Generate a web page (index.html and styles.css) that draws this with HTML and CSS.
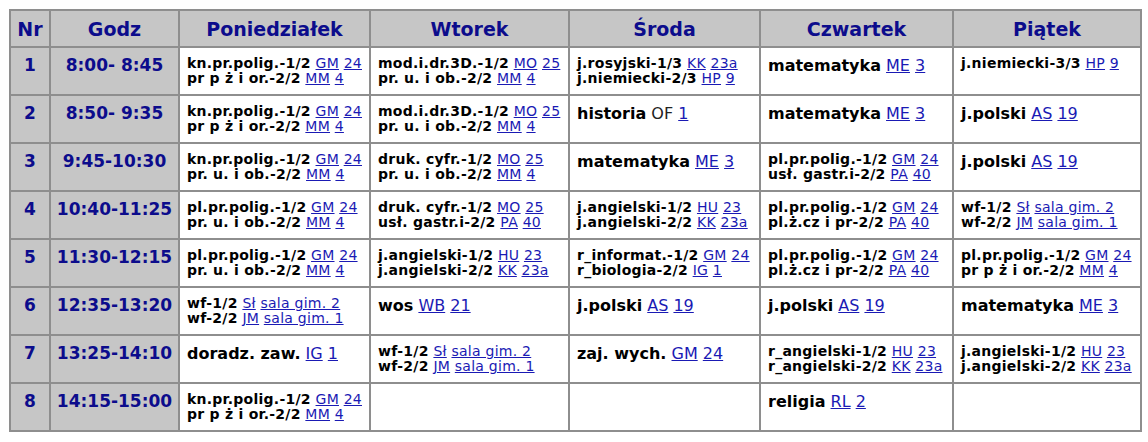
FILE: index.html
```html
<!DOCTYPE html>
<html lang="pl">
<head>
<meta charset="utf-8">
<title>Plan lekcji</title>
<link rel="stylesheet" href="styles.css">
</head>
<body>
<table class="tabela">
<thead>
<tr>
<th class="c-nr">Nr</th>
<th class="c-g">Godz</th>
<th class="c-d3">Poniedziałek</th>
<th class="c-d4">Wtorek</th>
<th class="c-d5">Środa</th>
<th class="c-d6">Czwartek</th>
<th class="c-d7">Piątek</th>
</tr>
</thead>
<tbody>
<tr>
<td class="nr">1</td>
<td class="g">8:00- 8:45</td>
<td class="l"><span class="p">kn.pr.polig.-1/2</span> <a href="#">GM</a> <a href="#">24</a><br><span class="p">pr p ż i or.-2/2</span> <a href="#">MM</a> <a href="#">4</a></td>
<td class="l"><span class="p">mod.i.dr.3D.-1/2</span> <a href="#">MO</a> <a href="#">25</a><br><span class="p">pr. u. i ob.-2/2</span> <a href="#">MM</a> <a href="#">4</a></td>
<td class="l"><span class="p">j.rosyjski-1/3</span> <a href="#">KK</a> <a href="#">23a</a><br><span class="p">j.niemiecki-2/3</span> <a href="#">HP</a> <a href="#">9</a></td>
<td class="l big"><span class="p">matematyka</span> <a href="#">ME</a> <a href="#">3</a></td>
<td class="l"><span class="p">j.niemiecki-3/3</span> <a href="#">HP</a> <a href="#">9</a></td>
</tr>
<tr>
<td class="nr">2</td>
<td class="g">8:50- 9:35</td>
<td class="l"><span class="p">kn.pr.polig.-1/2</span> <a href="#">GM</a> <a href="#">24</a><br><span class="p">pr p ż i or.-2/2</span> <a href="#">MM</a> <a href="#">4</a></td>
<td class="l"><span class="p">mod.i.dr.3D.-1/2</span> <a href="#">MO</a> <a href="#">25</a><br><span class="p">pr. u. i ob.-2/2</span> <a href="#">MM</a> <a href="#">4</a></td>
<td class="l big"><span class="p">historia</span> <span class="n">OF</span> <a href="#">1</a></td>
<td class="l big"><span class="p">matematyka</span> <a href="#">ME</a> <a href="#">3</a></td>
<td class="l big"><span class="p">j.polski</span> <a href="#">AS</a> <a href="#">19</a></td>
</tr>
<tr>
<td class="nr">3</td>
<td class="g">9:45-10:30</td>
<td class="l"><span class="p">kn.pr.polig.-1/2</span> <a href="#">GM</a> <a href="#">24</a><br><span class="p">pr. u. i ob.-2/2</span> <a href="#">MM</a> <a href="#">4</a></td>
<td class="l"><span class="p">druk. cyfr.-1/2</span> <a href="#">MO</a> <a href="#">25</a><br><span class="p">pr. u. i ob.-2/2</span> <a href="#">MM</a> <a href="#">4</a></td>
<td class="l big"><span class="p">matematyka</span> <a href="#">ME</a> <a href="#">3</a></td>
<td class="l"><span class="p">pl.pr.polig.-1/2</span> <a href="#">GM</a> <a href="#">24</a><br><span class="p">usł. gastr.i-2/2</span> <a href="#">PA</a> <a href="#">40</a></td>
<td class="l big"><span class="p">j.polski</span> <a href="#">AS</a> <a href="#">19</a></td>
</tr>
<tr>
<td class="nr">4</td>
<td class="g">10:40-11:25</td>
<td class="l"><span class="p">pl.pr.polig.-1/2</span> <a href="#">GM</a> <a href="#">24</a><br><span class="p">pr. u. i ob.-2/2</span> <a href="#">MM</a> <a href="#">4</a></td>
<td class="l"><span class="p">druk. cyfr.-1/2</span> <a href="#">MO</a> <a href="#">25</a><br><span class="p">usł. gastr.i-2/2</span> <a href="#">PA</a> <a href="#">40</a></td>
<td class="l"><span class="p">j.angielski-1/2</span> <a href="#">HU</a> <a href="#">23</a><br><span class="p">j.angielski-2/2</span> <a href="#">KK</a> <a href="#">23a</a></td>
<td class="l"><span class="p">pl.pr.polig.-1/2</span> <a href="#">GM</a> <a href="#">24</a><br><span class="p">pl.ż.cz i pr-2/2</span> <a href="#">PA</a> <a href="#">40</a></td>
<td class="l"><span class="p">wf-1/2</span> <a href="#">Sł</a> <a href="#">sala gim. 2</a><br><span class="p">wf-2/2</span> <a href="#">JM</a> <a href="#">sala gim. 1</a></td>
</tr>
<tr>
<td class="nr">5</td>
<td class="g">11:30-12:15</td>
<td class="l"><span class="p">pl.pr.polig.-1/2</span> <a href="#">GM</a> <a href="#">24</a><br><span class="p">pr. u. i ob.-2/2</span> <a href="#">MM</a> <a href="#">4</a></td>
<td class="l"><span class="p">j.angielski-1/2</span> <a href="#">HU</a> <a href="#">23</a><br><span class="p">j.angielski-2/2</span> <a href="#">KK</a> <a href="#">23a</a></td>
<td class="l"><span class="p">r_informat.-1/2</span> <a href="#">GM</a> <a href="#">24</a><br><span class="p">r_biologia-2/2</span> <a href="#">IG</a> <a href="#">1</a></td>
<td class="l"><span class="p">pl.pr.polig.-1/2</span> <a href="#">GM</a> <a href="#">24</a><br><span class="p">pl.ż.cz i pr-2/2</span> <a href="#">PA</a> <a href="#">40</a></td>
<td class="l"><span class="p">pl.pr.polig.-1/2</span> <a href="#">GM</a> <a href="#">24</a><br><span class="p">pr p ż i or.-2/2</span> <a href="#">MM</a> <a href="#">4</a></td>
</tr>
<tr>
<td class="nr">6</td>
<td class="g">12:35-13:20</td>
<td class="l"><span class="p">wf-1/2</span> <a href="#">Sł</a> <a href="#">sala gim. 2</a><br><span class="p">wf-2/2</span> <a href="#">JM</a> <a href="#">sala gim. 1</a></td>
<td class="l big"><span class="p">wos</span> <a href="#">WB</a> <a href="#">21</a></td>
<td class="l big"><span class="p">j.polski</span> <a href="#">AS</a> <a href="#">19</a></td>
<td class="l big"><span class="p">j.polski</span> <a href="#">AS</a> <a href="#">19</a></td>
<td class="l big"><span class="p">matematyka</span> <a href="#">ME</a> <a href="#">3</a></td>
</tr>
<tr>
<td class="nr">7</td>
<td class="g">13:25-14:10</td>
<td class="l big"><span class="p">doradz. zaw.</span> <a href="#">IG</a> <a href="#">1</a></td>
<td class="l"><span class="p">wf-1/2</span> <a href="#">Sł</a> <a href="#">sala gim. 2</a><br><span class="p">wf-2/2</span> <a href="#">JM</a> <a href="#">sala gim. 1</a></td>
<td class="l big"><span class="p">zaj. wych.</span> <a href="#">GM</a> <a href="#">24</a></td>
<td class="l"><span class="p">r_angielski-1/2</span> <a href="#">HU</a> <a href="#">23</a><br><span class="p">r_angielski-2/2</span> <a href="#">KK</a> <a href="#">23a</a></td>
<td class="l"><span class="p">j.angielski-1/2</span> <a href="#">HU</a> <a href="#">23</a><br><span class="p">j.angielski-2/2</span> <a href="#">KK</a> <a href="#">23a</a></td>
</tr>
<tr>
<td class="nr">8</td>
<td class="g">14:15-15:00</td>
<td class="l"><span class="p">kn.pr.polig.-1/2</span> <a href="#">GM</a> <a href="#">24</a><br><span class="p">pr p ż i or.-2/2</span> <a href="#">MM</a> <a href="#">4</a></td>
<td class="l">&nbsp;</td>
<td class="l">&nbsp;</td>
<td class="l big"><span class="p">religia</span> <a href="#">RL</a> <a href="#">2</a></td>
<td class="l">&nbsp;</td>
</tr>
</tbody>
</table>
</body>
</html>
```
FILE: styles.css
```css
html, body {
  margin: 0;
  padding: 0;
  background: #ffffff;
}

body {
  padding: 9px 0 0 9px;
  font-family: "DejaVu Sans", Verdana, sans-serif;
}

.tabela {
  border-collapse: separate;
  border-spacing: 0;
  table-layout: fixed;
  width: 1131px;
  border-left: 2px solid #8e8e8e;
  border-top: 2px solid #8e8e8e;
}

.tabela th,
.tabela td {
  box-sizing: border-box;
  border-right: 2px solid #8e8e8e;
  border-bottom: 2px solid #8e8e8e;
}

.tabela th {
  height: 37px;
  padding: 0;
  background: #c6c6c6;
  color: #0c0c8c;
  font-size: 19px;
  font-weight: bold;
  text-align: center;
  vertical-align: middle;
}

.c-nr { width: 40px; }
.c-g { width: 129px; }
.c-d3 { width: 191px; }
.c-d4 { width: 199px; }
.c-d5 { width: 191px; }
.c-d6 { width: 193px; }
.c-d7 { width: 188px; }

.tabela td {
  height: 48px;
  vertical-align: top;
}

.nr,
.g {
  padding: 7px 0 0 0;
  background: #c6c6c6;
  color: #0c0c8c;
  font-size: 17px;
  font-weight: bold;
  text-align: center;
  white-space: nowrap;
}

.l {
  padding: 8px 0 0 7px;
  background: #ffffff;
  font-size: 14px;
  line-height: 15px;
  letter-spacing: 0.25px;
  white-space: nowrap;
  color: #000000;
}

.l.big {
  padding-top: 9px;
  font-size: 16px;
  line-height: 18px;
  letter-spacing: 0;
}

.p {
  font-weight: bold;
  color: #000000;
}

.n {
  font-weight: normal;
  color: #222222;
}

.l a {
  font-weight: normal;
  color: #1a1ab4;
  text-decoration: underline;
}
```
